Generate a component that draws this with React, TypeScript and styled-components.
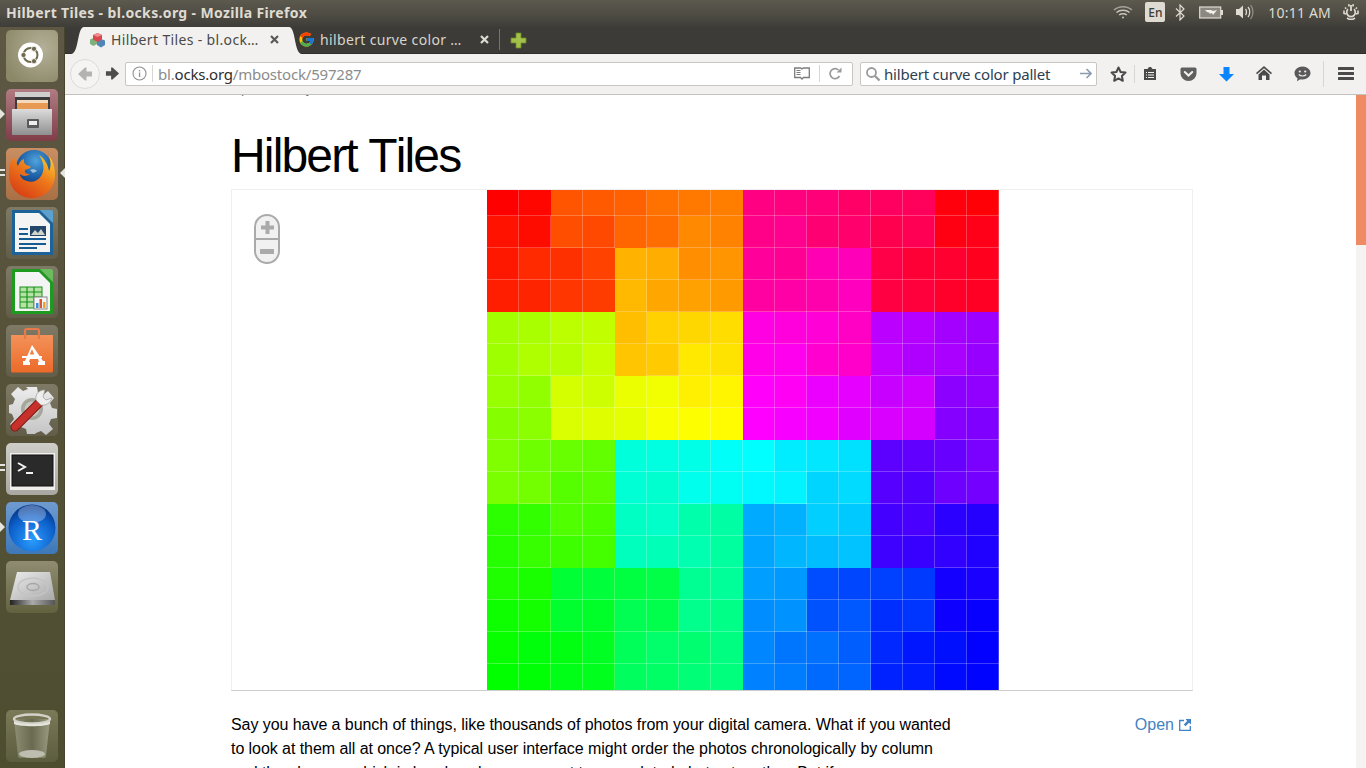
import React from "react";
import styled, { createGlobalStyle } from "styled-components";
import { FcGoogle } from "react-icons/fc";

const Global = createGlobalStyle`
  html, body { margin: 0; padding: 0; width: 100%; height: 100%; overflow: hidden; background: #fff; }
  #root { width: 1366px; height: 768px; }
  * { box-sizing: border-box; }
`;

const UI = `"Noto Sans", "Open Sans", sans-serif`;
const WEB = `"Liberation Sans", Arial, sans-serif`;

const Screen = styled.div`
  width: 1366px; height: 768px; display: flex; flex-direction: column; overflow: hidden;
`;
const TopPanel = styled.header`
  height: 27px; flex: none; display: flex; align-items: center; padding: 0 7px 3px 6px;
  background: linear-gradient(#5c5a4f 0%, #4f4d44 50%, #3e3d38 100%);
`;
const WindowTitle = styled.div`
  font: 700 14px ${UI}; color: #dfdbd2; flex: 1; letter-spacing: 0.35px; white-space: nowrap;
`;
const Indicators = styled.div`
  display: flex; align-items: center; height: 24px;
`;
const Lang = styled.div`
  width: 20px; height: 20px; border-radius: 2px; background: #dfdbd2; color: #3c3b37;
  font: 500 12px ${UI}; display: flex; align-items: center; justify-content: center; margin-right: 10px;
`;
const Clock = styled.div`
  font: 400 14px ${UI}; color: #dfdbd2; margin: 0 12px 0 13px; white-space: nowrap; letter-spacing: 0.2px;
`;
const Body = styled.div`
  flex: 1; display: flex; min-height: 0;
`;
const Launcher = styled.nav`
  width: 65px; flex: none; display: flex; flex-direction: column; gap: 7px; padding: 3px 0 6px 6px;
  background: linear-gradient(#5d5744 0%, #565239 45%, #4d4d30 100%);
  border-right: 1px solid #48452f;
`;
const Tile = styled.div<{ $end?: boolean }>`
  width: 52px; height: 52px; border-radius: 5px; flex: none; position: relative;
  margin-top: ${(p) => (p.$end ? "auto" : "0")};
  svg { display: block; width: 52px; height: 52px; border-radius: 5px; }
`;
const ArrowLeft = styled.span`
  position: absolute; left: -6px; top: 20px; width: 0; height: 0;
  border-left: 5px solid #e6e4de; border-top: 5px solid transparent; border-bottom: 5px solid transparent;
`;
const ArrowRight = styled.span`
  position: absolute; right: -7px; top: 20px; width: 0; height: 0;
  border-right: 5px solid #e6e4de; border-top: 5px solid transparent; border-bottom: 5px solid transparent;
`;
const Pips = styled.span`
  position: absolute; left: -6px; top: 21px; width: 5px; height: 7px;
  border-top: 2px solid #e6e4de; border-bottom: 2px solid #e6e4de;
`;
const Win = styled.main`
  flex: 1; min-width: 0; display: flex; flex-direction: column;
`;
const TabStrip = styled.div`
  height: 27px; flex: none; background: #3c3b37; display: flex; align-items: flex-end; padding-left: 19px;
  border-bottom: 1px solid #2f2e2b;
`;
const ActiveTab = styled.div`
  width: 205px; height: 27px; margin-bottom: -1px; background: #f2f1f0; position: relative;
  display: flex; align-items: center; padding: 0 10px 2px 5px; flex: none; z-index: 1;
  &::before, &::after { content: ""; position: absolute; bottom: 0; width: 13px; height: 27px; background: #f2f1f0; }
  &::before { left: -13px; clip-path: path("M13 0 C6 0 8 27 0 27 L13 27 Z"); }
  &::after { right: -13px; clip-path: path("M0 0 C7 0 5 27 13 27 L0 27 Z"); }
`;
const InactiveTab = styled.div`
  width: 211px; height: 21px; display: flex; align-items: center; padding: 0 10px 0 9px; flex: none;
  margin-bottom: 3px; border-right: 1px solid #77756e;
`;
const TabTitle = styled.span<{ $dark?: boolean }>`
  font: 400 14px ${UI}; color: ${(p) => (p.$dark ? "#4a4a46" : "#d8d5cc")}; flex: 1; margin-left: 5px;
  white-space: nowrap; overflow: hidden; letter-spacing: 0.35px;
`;
const NewTab = styled.div`
  width: 36px; height: 26px; display: flex; align-items: center; justify-content: center;
`;
const NavBar = styled.div`
  height: 41px; flex: none; background: #f2f1f0; border-bottom: 1px solid #c4c2bf; position: relative;
  display: flex; align-items: center; padding: 0 0 1px 60px;
`;
const BackCircle = styled.div`
  position: absolute; left: 5px; top: 5px; width: 30px; height: 30px; border-radius: 50%; z-index: 1;
  background: #f5f4f3; border: 1px solid #dddbd8; display: flex; align-items: center; justify-content: center;
`;
const ForwardSlot = styled.div`
  position: absolute; left: 40px; top: 12px; width: 16px; height: 16px; display: flex;
`;
const UrlBar = styled.div`
  width: 728px; height: 24px; flex: none; background: #fff; border: 1px solid #c8c6c2; border-radius: 2px;
  display: flex; align-items: center; padding: 0 10px 0 6px;
`;
const Sep = styled.span<{ $h?: number; $m?: string }>`
  width: 1px; height: ${(p) => p.$h ?? 17}px; background: #d8d6d2; margin: ${(p) => p.$m ?? "0"}; flex: none;
`;
const UrlText = styled.div`
  font: 400 15px ${UI}; color: #8c8c8c; flex: 1; white-space: nowrap; letter-spacing: -0.2px;
  b { font-weight: 400; color: #2d2d2d; }
`;
const SearchBar = styled.div`
  width: 237px; height: 24px; flex: none; background: #fff; border: 1px solid #c8c6c2; border-radius: 2px; margin-left: 7px;
  display: flex; align-items: center; padding: 0 3px 0 3px;
`;
const SearchText = styled.div`
  font: 400 15px ${UI}; color: #2d3e50; flex: 1; margin-left: 3px; white-space: nowrap; letter-spacing: -0.2px;
`;
const ToolSlot = styled.div<{ $w: number; $ml?: number }>`
  width: ${(p) => p.$w}px; margin-left: ${(p) => p.$ml ?? 0}px; flex: none; display: flex; align-items: center; justify-content: center; height: 24px;
`;
const Page = styled.div`
  flex: 1; min-height: 0; background: #fff; overflow: hidden; position: relative; padding-left: 166px;
`;
const Updated = styled.div`
  font: 400 14px/16px ${WEB}; color: #777; margin-top: -15px; height: 16px; white-space: nowrap;
`;
const Title = styled.h1`
  font: 400 48px/56px ${WEB}; letter-spacing: -1.85px; font-kerning: none; color: #000; margin: 32px 0 0 0; height: 61px;
`;
const MapBox = styled.div`
  width: 962px; height: 502px; border: 1px solid #eee; border-bottom: 1px solid #ccc; position: relative;
  display: flex;
`;
const TileGrid = styled.div`
  margin-left: 255px; width: 512px; height: 500px; flex: none; display: grid;
  grid-template-columns: repeat(16, 32px); grid-template-rows: 26px repeat(14, 32px) 26px;
`;
const Cell = styled.div``;
const ZoomControl = styled.div`
  position: absolute; left: 22px; top: 24px; width: 26px; height: 50px; border: 2px solid #aaa; border-radius: 13px;
  background: #f1f1f1; display: flex; flex-direction: column; overflow: hidden;
`;
const ZoomBtn = styled.div<{ $top?: boolean }>`
  flex: 1; display: flex; align-items: center; justify-content: center;
  border-bottom: ${(p) => (p.$top ? "2px solid #aaa" : "0")};
`;
const Copy = styled.div`
  width: 960px; display: flex; justify-content: space-between; padding-top: 22px;
`;
const Para = styled.p`
  width: 730px; margin: 0; font: 400 16px/24px ${WEB}; color: #000; letter-spacing: -0.06px;
`;
const OpenLink = styled.a`
  font: 400 16px/24px ${WEB}; color: #4183c4; display: flex; align-items: center; gap: 5px; height: 24px;
`;
const Thumb = styled.div`
  position: absolute; right: 0; top: 0; width: 10px; height: 150px; background: #ee8b62;
`;
const Track = styled.div`
  position: absolute; right: 0; top: 0; width: 10px; height: 100%; background: #f4f3f2;
`;

function d2xy(n: number, d: number): [number, number] {
  let x = 0, y = 0, t = d;
  for (let s = 1; s < n; s *= 2) {
    const rx = 1 & (t / 2);
    const ry = 1 & (t ^ rx);
    if (ry === 0) {
      if (rx === 1) { x = s - 1 - x; y = s - 1 - y; }
      [x, y] = [y, x];
    }
    x += s * rx; y += s * ry;
    t = Math.floor(t / 4);
  }
  return [x, y];
}

const N = 16;
const order: number[][] = Array.from({ length: N }, () => Array(N).fill(0));
for (let d = 0; d < N * N; d++) {
  const [x, y] = d2xy(N, d);
  order[y][x] = d;
}
const LINE = "rgba(255,255,255,.24)";
const close = (a: number, b: number) => Math.abs(a - b) < 12;

function Tiles() {
  const cells: React.ReactNode[] = [];
  for (let r = 0; r < N; r++) {
    for (let c = 0; c < N; c++) {
      const d = order[r][c];
      const right = c === N - 1 || close(d, order[r][c + 1]);
      const bottom = r < N - 1 && close(d, order[r + 1][c]);
      const colour = `hsl(${(d * 360) / 256},100%,50%)`;
      cells.push(
        <Cell
          key={d}
          style={{
            backgroundColor: colour,
            boxShadow: [right ? `inset -1px 0 0 ${LINE}` : "", bottom ? `inset 0 -1px 0 ${LINE}` : ""].filter(Boolean).join(",") || "none",
          }}
        />
      );
    }
  }
  return <TileGrid>{cells}</TileGrid>;
}

const Dash = () => (
  <svg viewBox="0 0 52 52">
    <defs><radialGradient id="dg" cx=".7" cy=".35" r=".8"><stop offset="0" stopColor="#b3b098" /><stop offset="1" stopColor="#8b8868" /></radialGradient></defs>
    <rect width="52" height="52" fill="url(#dg)" />
    <circle cx="24.500" cy="25" r="12.500" fill="#fff" />
    <circle cx="24.500" cy="25" r="7" fill="none" stroke="#6f6a4e" strokeWidth="2" />
    <circle cx="17.500" cy="25" r="2.600" fill="#6f6a4e" stroke="#fff" strokeWidth=".8" />
    <circle cx="28" cy="18.800" r="2.600" fill="#6f6a4e" stroke="#fff" strokeWidth=".8" />
    <circle cx="28" cy="31.200" r="2.600" fill="#6f6a4e" stroke="#fff" strokeWidth=".8" />
  </svg>
);
const Files = () => (
  <svg viewBox="0 0 52 52">
    <defs>
      <linearGradient id="fb" x1="0" y1="0" x2="0" y2="1"><stop offset="0" stopColor="#dcdcdc" /><stop offset="1" stopColor="#8f8f8f" /></linearGradient>
      <linearGradient id="ft" x1="0" y1="0" x2="0" y2="1"><stop offset="0" stopColor="#b07b82" /><stop offset="1" stopColor="#7f3d48" /></linearGradient>
    </defs>
    <rect width="52" height="52" fill="url(#ft)" />
    <path d="M9 3h35v8H9z" fill="#cfcfcf" />
    <path d="M9 8h35v13H9z" fill="#3c3c3c" />
    <path d="M11 11h31v3H11z" fill="#f4dbbd" />
    <path d="M11 14h31v6H11z" fill="#e89a55" />
    <path d="M6 20h40v26H6z" fill="url(#fb)" />
    <rect x="21" y="30" width="12" height="9" rx="1" fill="#5a5a5a" />
    <rect x="23" y="32" width="8" height="4" fill="#eee" />
  </svg>
);
const Firefox = () => (
  <svg viewBox="0 0 52 52">
    <defs>
      <radialGradient id="fg" cx=".55" cy=".3" r=".7"><stop offset="0" stopColor="#4fa3dc" /><stop offset=".6" stopColor="#1f62a8" /><stop offset="1" stopColor="#123c80" /></radialGradient>
      <linearGradient id="ff" x1=".2" y1="1" x2=".9" y2="0"><stop offset="0" stopColor="#d63a12" /><stop offset=".55" stopColor="#ee7a1c" /><stop offset="1" stopColor="#fcd22c" /></linearGradient>
      <linearGradient id="fft" x1="0" y1="0" x2="0" y2="1"><stop offset="0" stopColor="#c98e62" /><stop offset="1" stopColor="#a96f45" /></linearGradient>
    </defs>
    <rect width="52" height="52" fill="url(#fft)" />
    <circle cx="28" cy="20" r="18" fill="url(#fg)" />
    <path d="M8 9C3 15 3 22 3 27c0 13 10 23 23 23s23-10 23-23c0-7-2-14-6-19 2 6 2 10 0 15-1-6-4-12-10-16 5 7 6 15 2 21-3 5-9 7-14 5-4-1-7-4-7-7 3 3 8 2 10 0-3 0-6-1-5-4 3-1 7-2 5-4-4 0-7-3-6-7-3 1-5 4-6 7-2-3-3-6-4-9z" fill="url(#ff)" />
    <path d="M24 22c2-1 5-1 7 1l-4 2z" fill="#fff" opacity=".55" />
  </svg>
);
const Writer = () => (
  <svg viewBox="0 0 52 52">
    <defs><linearGradient id="wt" x1="0" y1="0" x2="0" y2="1"><stop offset="0" stopColor="#7f7a66" /><stop offset="1" stopColor="#625d48" /></linearGradient></defs>
    <rect width="52" height="52" fill="url(#wt)" />
    <path d="M6 3h28l13 13v32H6z" fill="#1d6299" />
    <path d="M34 3h11a2 2 0 0 1 2 2v11z" fill="#5ba0cf" />
    <path d="M9 6h24l11 11v28H9z" fill="#f4f4f4" />
    <rect x="13" y="21" width="9" height="2" fill="#165b8f" />
    <rect x="13" y="26" width="9" height="2" fill="#165b8f" />
    <rect x="13" y="31" width="27" height="2" fill="#165b8f" />
    <rect x="13" y="36" width="27" height="2" fill="#165b8f" />
    <rect x="13" y="40" width="18" height="2" fill="#165b8f" />
    <rect x="24" y="19" width="16" height="10" fill="#24466b" />
    <path d="M25 28l4-5 3 3 3-4 4 6z" fill="#cfd4c9" />
  </svg>
);
const Calc = () => (
  <svg viewBox="0 0 52 52">
    <defs><linearGradient id="ct" x1="0" y1="0" x2="0" y2="1"><stop offset="0" stopColor="#7f7a66" /><stop offset="1" stopColor="#625d48" /></linearGradient></defs>
    <rect width="52" height="52" fill="url(#ct)" />
    <path d="M6 3h28l13 13v32H6z" fill="#1e9a1e" />
    <path d="M34 3h11a2 2 0 0 1 2 2v11z" fill="#69bd5e" />
    <path d="M9 6h24l11 11v28H9z" fill="#f4f4f4" />
    <rect x="14" y="21" width="22" height="21" fill="#b5e3a5" stroke="#1a8f1a" strokeWidth="1" />
    <path d="M14 26h22M14 31h22M14 36h22M21 21v21M28 21v21" stroke="#1a8f1a" strokeWidth="1.200" fill="none" />
    <rect x="28" y="31" width="13" height="12" fill="#f5f5f5" stroke="#888" strokeWidth="1" />
    <rect x="30" y="37" width="2.500" height="5" fill="#3a8fd6" />
    <rect x="33.500" y="33" width="2.500" height="9" fill="#dd5533" />
    <rect x="37" y="36" width="2.500" height="6" fill="#efa52d" />
  </svg>
);
const Software = () => (
  <svg viewBox="0 0 52 52">
    <defs>
      <linearGradient id="st" x1="0" y1="0" x2="0" y2="1"><stop offset="0" stopColor="#7f7a66" /><stop offset="1" stopColor="#625d48" /></linearGradient>
      <linearGradient id="sb" x1="0" y1="0" x2="0" y2="1"><stop offset="0" stopColor="#f3925a" /><stop offset="1" stopColor="#ec6a28" /></linearGradient>
    </defs>
    <rect width="52" height="52" fill="url(#st)" />
    <path d="M5 10h42v36a1.500 1.500 0 0 1-1.500 1.500h-39A1.500 1.500 0 0 1 5 46z" fill="url(#sb)" />
    <path d="M19 14V6a2 2 0 0 1 2-2h10a2 2 0 0 1 2 2v8" fill="none" stroke="#e8794a" strokeWidth="2.200" />
    <path d="M26 20l-7 16h-2v4h7v-3h-1l1-3h8l1 3h-1v3h7v-4h-2zM23.800 29.500l2.200-5.500 2.200 5.500z" fill="#fff" />
    <path d="M16 31h20v2H16z" fill="#fff" />
  </svg>
);
const Settings = () => (
  <svg viewBox="0 0 52 52">
    <defs>
      <linearGradient id="gt" x1="0" y1="0" x2="0" y2="1"><stop offset="0" stopColor="#7f7a66" /><stop offset="1" stopColor="#625d48" /></linearGradient>
      <linearGradient id="gg" x1="0" y1="0" x2="0" y2="1"><stop offset="0" stopColor="#ececec" /><stop offset="1" stopColor="#c4c4c4" /></linearGradient>
    </defs>
    <rect width="52" height="52" fill="url(#gt)" />
    <path d="M20 3h11l1 6 5 2 5-4 6 7-4 5 2 5 5 1v9l-6 1-2 5 4 5-7 6-5-4-5 2-1 1H21l-1-5-5-2-5 4-6-7 4-5-2-5-3-1V21l4-1 2-5-4-5 7-7 5 4 5-2z" fill="url(#gg)" />
    <circle cx="26" cy="25" r="11" fill="#a7a69c" />
    <circle cx="26" cy="25" r="7.500" fill="#c8c7bf" />
    <path d="M9 43L34 18" stroke="#7a1a18" strokeWidth="9" strokeLinecap="round" />
    <path d="M9 43L34 18" stroke="#c8312b" strokeWidth="7" strokeLinecap="round" />
    <path d="M37 6c-5 1-8 5-7 10l5 5c5 1 9-2 11-7l-6 2-3-3 2-7z" fill="#eee" stroke="#999" strokeWidth=".7" />
  </svg>
);
const Terminal = () => (
  <svg viewBox="0 0 52 52">
    <defs><linearGradient id="tt" x1="0" y1="0" x2="0" y2="1"><stop offset="0" stopColor="#cfcdc8" /><stop offset="1" stopColor="#a9a7a1" /></linearGradient></defs>
    <rect width="52" height="52" fill="url(#tt)" />
    <rect x="4" y="10" width="45" height="37" fill="#f0efec" />
    <rect x="6" y="12" width="41" height="31" fill="#2a2a2a" stroke="#111" strokeWidth="1" />
    <path d="M12 20l7 4-7 4" fill="none" stroke="#f2f2f2" strokeWidth="2" />
    <rect x="20" y="29" width="7" height="2" fill="#f2f2f2" />
  </svg>
);
const RLang = () => (
  <svg viewBox="0 0 52 52">
    <defs>
      <linearGradient id="rt" x1="0" y1="0" x2="0" y2="1"><stop offset="0" stopColor="#6f9ad0" /><stop offset="1" stopColor="#3e78b8" /></linearGradient>
      <radialGradient id="rb" cx=".5" cy=".75" r=".7"><stop offset="0" stopColor="#2a9dff" /><stop offset=".7" stopColor="#0d5fc9" /><stop offset="1" stopColor="#063a90" /></radialGradient>
    </defs>
    <rect width="52" height="52" fill="url(#rt)" />
    <circle cx="26" cy="26" r="23.500" fill="url(#rb)" />
    <ellipse cx="26" cy="12" rx="14" ry="9" fill="#fff" opacity=".3" />
    <text x="26" y="38" textAnchor="middle" fontFamily="'Liberation Serif', serif" fontSize="30" fill="#fff">R</text>
  </svg>
);
const Disk = () => (
  <svg viewBox="0 0 52 52">
    <defs>
      <linearGradient id="ht" x1="0" y1="0" x2="0" y2="1"><stop offset="0" stopColor="#8f8c72" /><stop offset="1" stopColor="#63623f" /></linearGradient>
      <linearGradient id="hb" x1="0" y1="0" x2="1" y2="1"><stop offset="0" stopColor="#ececec" /><stop offset="1" stopColor="#a8a8a8" /></linearGradient>
      <linearGradient id="hs" x1="0" y1="0" x2="1" y2="0"><stop offset="0" stopColor="#222" /><stop offset=".5" stopColor="#aaa" /><stop offset="1" stopColor="#555" /></linearGradient>
    </defs>
    <rect width="52" height="52" fill="url(#ht)" />
    <path d="M11 11h33l5 28H4z" fill="url(#hb)" />
    <path d="M4 39h45v5H4z" fill="url(#hs)" />
    <ellipse cx="27" cy="26" rx="15" ry="9" fill="none" stroke="#c4c4c4" strokeWidth="1.400" />
    <ellipse cx="27" cy="26" rx="6" ry="3.500" fill="none" stroke="#a5a5a5" strokeWidth="1.400" />
  </svg>
);
const Trash = () => (
  <svg viewBox="0 0 52 52">
    <defs>
      <linearGradient id="xt" x1="0" y1="0" x2="0" y2="1"><stop offset="0" stopColor="#7a7a58" /><stop offset="1" stopColor="#5c5c3f" /></linearGradient>
      <linearGradient id="xb" x1="0" y1="0" x2="1" y2="0"><stop offset="0" stopColor="#8e8e76" /><stop offset=".5" stopColor="#6a6a50" /><stop offset="1" stopColor="#9a9a82" /></linearGradient>
    </defs>
    <rect width="52" height="52" fill="url(#xt)" />
    <path d="M8 9h36l-4 37a2 3 0 0 1-2 2H14a2 3 0 0 1-2-2z" fill="url(#xb)" />
    <ellipse cx="26" cy="44" rx="13" ry="4" fill="#bdbdb0" />
    <ellipse cx="26" cy="9" rx="18" ry="4.500" fill="none" stroke="#d2d2c8" strokeWidth="2.400" />
    <path d="M8 11c6 4 30 4 36 0v3c-6 3-30 3-36 0z" fill="#e4e4dc" />
  </svg>
);

const Wifi = () => (
  <svg width="20" height="16" viewBox="0 0 20 16" fill="none" stroke="#c9c6bd" strokeWidth="1.500" style={{ marginRight: 12 }}>
    <path d="M1 6c5-4.500 13-4.500 18 0" opacity=".7" />
    <path d="M3.500 8.500c3.500-3 9.500-3 13 0" />
    <path d="M6.200 11c2-1.700 5.600-1.700 7.600 0" />
    <circle cx="10" cy="13.500" r="1" fill="#c9c6bd" stroke="none" />
  </svg>
);
const Bluetooth = () => (
  <svg width="10" height="17" viewBox="0 0 10 17" fill="none" stroke="#dfdbd2" strokeWidth="1.200" style={{ marginRight: 14 }}>
    <path d="M1 4.500l8 7.500-4 4V1l4 4-8 7.500" />
  </svg>
);
const Battery = () => (
  <svg width="25" height="13" viewBox="0 0 25 13" style={{ marginRight: 11 }}>
    <rect x=".7" y="1" width="21" height="11" fill="#8a8880" stroke="#dfdbd2" strokeWidth="1.200" />
    <rect x="22" y="4" width="2" height="5" fill="#dfdbd2" />
    <path d="M6 4h6l2 1 4-1-4 5-1-2-3 1 1-1-3-1z" fill="#f3f1ea" />
  </svg>
);
const Volume = () => (
  <svg width="20" height="16" viewBox="0 0 20 16" fill="none">
    <path d="M1 5h3l4-3.500v13L4 11H1z" fill="#dfdbd2" />
    <path d="M10.500 5c1.300 1.500 1.300 4.500 0 6" stroke="#dfdbd2" strokeWidth="1.300" />
    <path d="M13 3c2.300 2.600 2.300 7.400 0 10" stroke="#dfdbd2" strokeWidth="1.300" />
    <path d="M15.500 1c3.300 3.800 3.300 10.200 0 14" stroke="#8e8c84" strokeWidth="1.300" />
  </svg>
);
const PowerGear = () => (
  <svg width="16" height="16" viewBox="0 0 16 16" fill="none">
    <path d="M5 1h1v1.500M11 1h-1v1.500M1 6.500v3l2 .5M15 6.500v3l-2 .5M4 14l2 1.200h4L12 14M3.200 4.800L2 3.500M12.800 4.800L14 3.500" stroke="#dfdbd2" strokeWidth="1.600" />
    <path d="M5 5.200a4.300 4.300 0 1 0 6 0" stroke="#dfdbd2" strokeWidth="1.700" />
    <path d="M8 1v6" stroke="#dfdbd2" strokeWidth="1.800" />
  </svg>
);
const Favicon = () => (
  <svg width="17" height="16" viewBox="0 0 17 16" style={{ flex: "none" }}>
    <path d="M1 7.500l3.500-1.500 3.500 1.500V12l-3.500 2L1 12z" fill="#7fb27a" />
    <path d="M8 8.500l4-1.500 4 1.500V13l-4 2.500L8 13z" fill="#4f86b8" />
    <path d="M4 3l4.500-2L13 3v4.500L8.500 10 4 7.500z" fill="#d9474d" />
    <path d="M8.500 5L4 3l4.500-2L13 3z" fill="#ef8d8d" />
  </svg>
);
const Close = ({ c }: { c: string }) => (
  <svg width="9" height="9" viewBox="0 0 9 9" style={{ flex: "none" }}>
    <path d="M1 1l7 7M8 1L1 8" stroke={c} strokeWidth="2.200" />
  </svg>
);
const Plus = () => (
  <svg width="17" height="17" viewBox="0 0 17 17">
    <path d="M6 1h5v5h5v5h-5v5H6v-5H1V6h5z" fill="#a3c14a" stroke="#6d8a22" strokeWidth=".8" />
  </svg>
);
const BackArrow = () => (
  <svg width="16" height="16" viewBox="0 0 16 16">
    <path d="M1 8l7-6.500h1.500V5.500H15v5H9.500v4H8z" fill="#b3b3b3" />
  </svg>
);
const ForwardArrow = () => (
  <svg width="15" height="15" viewBox="0 0 16 16">
    <path d="M15 8L8 1.500H6.500V5.500H1v5h5.500v4H8z" fill="#4d4d4d" />
  </svg>
);
const Info = () => (
  <svg width="15" height="15" viewBox="0 0 15 15" fill="none" style={{ flex: "none", margin: "0 5px 0 0" }}>
    <circle cx="7.500" cy="7.500" r="6.500" stroke="#8f8f8f" strokeWidth="1.100" />
    <rect x="6.900" y="6.500" width="1.300" height="4.500" fill="#8f8f8f" />
    <rect x="6.900" y="4" width="1.300" height="1.400" fill="#8f8f8f" />
  </svg>
);
const Reader = () => (
  <svg width="16" height="13" viewBox="0 0 16 13" style={{ flex: "none" }} fill="none">
    <path d="M.7 1h6l1.300 1 1.300-1h6v9.500H9.500L8 12l-1.500-1.500H.7z" stroke="#7c7c7c" strokeWidth="1.300" />
    <path d="M2.500 3.500h4M2.500 5.500h4M2.500 7.500h4" stroke="#7c7c7c" strokeWidth="1" />
  </svg>
);
const Reload = () => (
  <svg width="13" height="13" viewBox="0 0 13 13" fill="none" style={{ flex: "none" }}>
    <path d="M10.500 9a5 5 0 1 1-1-6" stroke="#9a9a9a" strokeWidth="1.700" />
    <path d="M7.500 5.500h5v-5z" fill="#9a9a9a" />
  </svg>
);
const Magnifier = () => (
  <svg width="16" height="16" viewBox="0 0 16 16" fill="none" style={{ flex: "none", marginLeft: 1 }}>
    <circle cx="6.500" cy="6.500" r="4.500" stroke="#9b9b9b" strokeWidth="1.800" />
    <path d="M10 10l4.500 4.500" stroke="#9b9b9b" strokeWidth="2.400" />
  </svg>
);
const GoArrow = () => (
  <svg width="12" height="11" viewBox="0 0 12 11" fill="none" style={{ flex: "none", marginRight: 1 }}>
    <path d="M0 5.500h10.500M6.500 1l4.500 4.500L6.500 10" stroke="#8a9cb0" strokeWidth="1.600" />
  </svg>
);
const Star = () => (
  <svg width="17" height="16" viewBox="0 0 17 16" fill="none">
    <path d="M8.500 1.500l2.100 4.500 4.900.6-3.600 3.400.9 4.800-4.300-2.400-4.300 2.400.9-4.800L1.500 6.600l4.900-.6z" stroke="#4a4a4a" strokeWidth="2" strokeLinejoin="round" />
  </svg>
);
const ReadingList = () => (
  <svg width="14" height="15" viewBox="0 0 14 15">
    <path d="M1 3h3.500L6 1h2l1.500 2H13v11H1z" fill="#4a4a4a" />
    <path d="M3 6h1v1H3zM5 6h6v1H5zM3 8.500h1v1H3zM5 8.500h6v1H5zM3 11h1v1H3zM5 11h6v1H5z" fill="#f2f1f0" />
  </svg>
);
const Pocket = () => (
  <svg width="17" height="14" viewBox="0 0 17 14">
    <path d="M2 .5h13A1.500 1.500 0 0 1 16.500 2v4.500a8 7.500 0 0 1-16 0V2A1.500 1.500 0 0 1 2 .5z" fill="#5f5f5f" />
    <path d="M4.800 5l3.700 3.500L12.200 5" fill="none" stroke="#f2f1f0" strokeWidth="2.100" strokeLinecap="round" />
  </svg>
);
const Download = () => (
  <svg width="15" height="16" viewBox="0 0 15 16">
    <path d="M4.500 1h6v7H15l-7.500 7.500L0 8h4.500z" fill="#0a84ff" />
  </svg>
);
const Home = () => (
  <svg width="16" height="15" viewBox="0 0 16 15">
    <path d="M8 0l8 7-1 1.300-7-6-7 6-1-1.300z" fill="#4a4a4a" />
    <path d="M8 3.500l5.500 5V14H10V9.500H6V14H2.500V8.500z" fill="#4a4a4a" />
  </svg>
);
const Chat = () => (
  <svg width="17" height="16" viewBox="0 0 17 16">
    <path d="M8.500.5c4.500 0 8 3 8 6.500s-3.500 6.500-8 6.500c-.8 0-1.500-.1-2.200-.2L3 15.300l.5-3C1.700 11.100.5 9.200.5 7 .5 3.500 4 .5 8.500.5z" fill="#5a5a5a" />
    <circle cx="5.800" cy="5.500" r="1.100" fill="#f2f1f0" />
    <circle cx="11.200" cy="5.500" r="1.100" fill="#f2f1f0" />
    <path d="M4.800 8.500c1.800 2 5.600 2 7.400 0" fill="none" stroke="#f2f1f0" strokeWidth="1.200" />
  </svg>
);
const Burger = () => (
  <svg width="16" height="13" viewBox="0 0 16 13">
    <rect y="0" width="16" height="3" rx=".5" fill="#4a4a4a" />
    <rect y="5" width="16" height="3" rx=".5" fill="#4a4a4a" />
    <rect y="10" width="16" height="3" rx=".5" fill="#4a4a4a" />
  </svg>
);
const ZoomPlus = () => (
  <svg width="15" height="15" viewBox="0 0 15 15"><path d="M5.500 1h4v4.500H14v4H9.500V14h-4V9.500H1v-4h4.500z" fill="#aaa" /></svg>
);
const ZoomMinus = () => (
  <svg width="14" height="5" viewBox="0 0 14 5"><rect width="14" height="5" fill="#aaa" /></svg>
);
const External = () => (
  <svg width="12" height="12" viewBox="0 0 12 12" fill="none">
    <path d="M5 1.500H.7v9.800h10.600V7" stroke="#4183c4" strokeWidth="1.300" />
    <path d="M6.500 0H12v5.500L10 3.800 6.500 7.300 4.800 5.500 8.200 2z" fill="#4183c4" />
  </svg>
);

export default function App() {
  return (
    <Screen>
      <Global />
      <TopPanel>
        <WindowTitle>Hilbert Tiles - bl.ocks.org - Mozilla Firefox</WindowTitle>
        <Indicators>
          <Wifi />
          <Lang>En</Lang>
          <Bluetooth />
          <Battery />
          <Volume />
          <Clock>10:11 AM</Clock>
          <PowerGear />
        </Indicators>
      </TopPanel>
      <Body>
        <Launcher>
          <Tile><Dash /></Tile>
          <Tile><ArrowLeft /><Files /></Tile>
          <Tile><Pips /><ArrowRight /><Firefox /></Tile>
          <Tile><Writer /></Tile>
          <Tile><Calc /></Tile>
          <Tile><Software /></Tile>
          <Tile><Settings /></Tile>
          <Tile><Pips /><Terminal /></Tile>
          <Tile><ArrowLeft /><RLang /></Tile>
          <Tile><Disk /></Tile>
          <Tile $end><Trash /></Tile>
        </Launcher>
        <Win>
          <TabStrip>
            <ActiveTab>
              <Favicon />
              <TabTitle $dark>Hilbert Tiles - bl.ock…</TabTitle>
              <Close c="#5a5a5a" />
            </ActiveTab>
            <InactiveTab>
              <FcGoogle size={17} style={{ flex: "none" }} />
              <TabTitle>hilbert curve color …</TabTitle>
              <Close c="#dfdbd2" />
            </InactiveTab>
            <NewTab><Plus /></NewTab>
          </TabStrip>
          <NavBar>
            <BackCircle><BackArrow /></BackCircle>
            <ForwardSlot><ForwardArrow /></ForwardSlot>
            <UrlBar>
              <Info />
              <Sep $m="0 5px 0 0" />
              <UrlText>bl.<b>ocks.org</b>/mbostock/597287</UrlText>
              <Reader />
              <Sep $m="0 9px 0 9px" />
              <Reload />
            </UrlBar>
            <SearchBar>
              <Magnifier />
              <SearchText>hilbert curve color pallet</SearchText>
              <GoArrow />
            </SearchBar>
            <ToolSlot $w={32} $ml={5}><Star /></ToolSlot>
            <Sep $h={18} />
            <ToolSlot $w={30}><ReadingList /></ToolSlot>
            <ToolSlot $w={46}><Pocket /></ToolSlot>
            <ToolSlot $w={30}><Download /></ToolSlot>
            <ToolSlot $w={46}><Home /></ToolSlot>
            <ToolSlot $w={30}><Chat /></ToolSlot>
            <ToolSlot $w={6} />
            <Sep $h={26} />
            <ToolSlot $w={43}><Burger /></ToolSlot>
          </NavBar>
          <Page>
            <Updated>Updated July 10, 2012</Updated>
            <Title>Hilbert Tiles</Title>
            <MapBox>
              <ZoomControl>
                <ZoomBtn $top><ZoomPlus /></ZoomBtn>
                <ZoomBtn><ZoomMinus /></ZoomBtn>
              </ZoomControl>
              <Tiles />
            </MapBox>
            <Copy>
              <Para>
                Say you have a bunch of things, like thousands of photos from your digital camera. What if you wanted
                to look at them all at once? A typical user interface might order the photos chronologically by column
                and then by row, which is handy unless you want to see related photos together. But if you
              </Para>
              <OpenLink>Open <External /></OpenLink>
            </Copy>
            <Track />
            <Thumb />
          </Page>
        </Win>
      </Body>
    </Screen>
  );
}
